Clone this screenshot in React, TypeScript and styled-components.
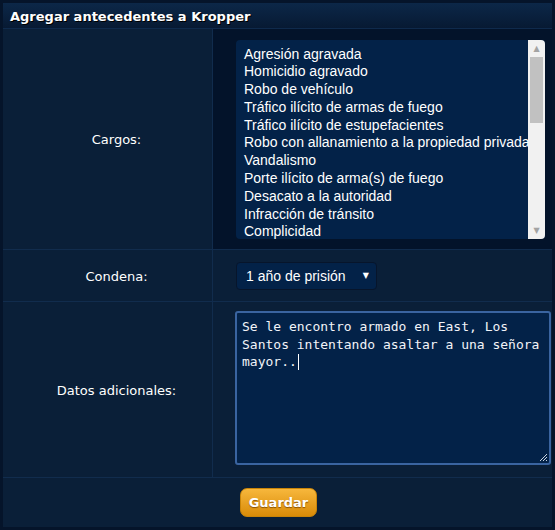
import React from 'react';
import styled, { createGlobalStyle } from 'styled-components';

const cargos = [
  'Agresión agravada',
  'Homicidio agravado',
  'Robo de vehículo',
  'Tráfico ilícito de armas de fuego',
  'Tráfico ilícito de estupefacientes',
  'Robo con allanamiento a la propiedad privada',
  'Vandalismo',
  'Porte ilícito de arma(s) de fuego',
  'Desacato a la autoridad',
  'Infracción de tránsito',
  'Complicidad',
  'Evasión de arresto',
  'Conducción temeraria',
];

export default function App() {
  return (
    <>
      <GlobalStyle />
      <Panel>
        <Header children="Agregar antecedentes a Kropper" />

        <Form>
          <Row height={220}>
            <Label children="Cargos:" />
            <Field dark>
              <ListBox>
                <Options>
                  {cargos.map((cargo) => (
                    <Option key={cargo} children={cargo} />
                  ))}
                </Options>
                <ScrollTrack>
                  <Arrow children="▲" />
                  <ThumbArea>
                    <Thumb />
                  </ThumbArea>
                  <Arrow children="▼" />
                </ScrollTrack>
              </ListBox>
            </Field>
          </Row>

          <Row height={51}>
            <Label children="Condena:" />
            <Field>
              <Select>
                <SelectValue children="1 año de prisión" />
                <SelectArrow children="▼" />
              </Select>
            </Field>
          </Row>

          <Row height={175}>
            <Label children="Datos adicionales:" />
            <Field top>
              <TextArea>
                Se le encontro armado en East, Los Santos intentando asaltar a una señora mayor..
                <Caret />
                <Grip width="10" height="10" viewBox="0 0 10 10">
                  <path d="M9 2 L2 9 M9 5 L5 9 M9 8 L8 9" stroke="#c9d3e0" strokeWidth="1" />
                </Grip>
              </TextArea>
            </Field>
          </Row>

          <Footer>
            <Button children="Guardar" />
          </Footer>
        </Form>
      </Panel>
    </>
  );
}

const GlobalStyle = createGlobalStyle`
  body {
    margin: 0;
    background: #041326;
  }
`;

const Panel = styled.div`
  width: 555px;
  height: 530px;
  box-sizing: border-box;
  border: 3px solid #05142a;
  background: #0a1f38;
  display: flex;
  flex-direction: column;
  font-family: 'DejaVu Sans', Verdana, sans-serif;
  color: #ffffff;
`;

const Header = styled.div`
  height: 26px;
  box-sizing: border-box;
  padding: 1px 0 0 7px;
  display: flex;
  align-items: center;
  background: linear-gradient(#0c2748, #071a33);
  border-bottom: 1px solid #0f2a4c;
  font-weight: 700;
  font-size: 13px;
  text-shadow: 1px 1px 0 #000;
`;

const Form = styled.div`
  display: flex;
  flex-direction: column;
  flex: 1;
`;

const Row = styled.div<{ height: number }>`
  display: grid;
  grid-template-columns: 210px 1fr;
  height: ${(props) => props.height}px;
  border-bottom: 1px solid #112c4d;
`;

const Label = styled.div`
  display: flex;
  align-items: center;
  justify-content: center;
  border-right: 1px solid #112c4d;
  font-size: 13px;
  padding: 1px 0 0 18px;
`;

const Field = styled.div<{ dark?: boolean; top?: boolean }>`
  display: flex;
  align-items: ${(props) => (props.top ? 'flex-start' : 'center')};
  padding: ${(props) => (props.top ? '9px 0 0 23px' : '0 0 0 23px')};
  background: ${(props) => (props.dark ? '#03132a' : 'transparent')};
`;

const ListBox = styled.div`
  width: 309px;
  height: 199px;
  display: flex;
  border-radius: 4px;
  overflow: hidden;
  background: #032248;
`;

const Options = styled.div`
  flex: 1;
  overflow: hidden;
  padding: 6px 0 0 8px;
  font-family: 'Liberation Sans', Arial, sans-serif;
  font-size: 14px;
  line-height: 17.8px;
  white-space: nowrap;
`;

const Option = styled.div``;

const ScrollTrack = styled.div`
  width: 17px;
  background: #f1f1f1;
  display: flex;
  flex-direction: column;
`;

const Arrow = styled.div`
  height: 17px;
  font-size: 8px;
  color: #a3a3a3;
  display: flex;
  align-items: center;
  justify-content: center;
  font-family: 'DejaVu Sans', sans-serif;
`;

const ThumbArea = styled.div`
  flex: 1;
  padding: 0 2px;
`;

const Thumb = styled.div`
  height: 66px;
  background: #c1c1c1;
`;

const Select = styled.div`
  width: 141px;
  height: 28px;
  box-sizing: border-box;
  display: flex;
  align-items: center;
  justify-content: space-between;
  padding: 0 7px 0 9px;
  border: 1px solid #07152b;
  border-radius: 4px;
  background: #032248;
  font-family: 'Liberation Sans', Arial, sans-serif;
  font-size: 14px;
`;

const SelectValue = styled.span`
  white-space: nowrap;
`;

const SelectArrow = styled.span`
  font-family: 'DejaVu Sans', sans-serif;
  font-size: 8px;
`;

const TextArea = styled.div`
  position: relative;
  width: 316px;
  height: 154px;
  box-sizing: border-box;
  margin-left: -1px;
  padding: 5px 5px;
  border: 2px solid #3a64a0;
  border-radius: 3px;
  background: #032248;
  font-family: 'DejaVu Sans Mono', 'Liberation Mono', monospace;
  font-size: 13px;
  line-height: 17.5px;
  color: #f2f4f8;
`;

const Caret = styled.span`
  display: inline-block;
  width: 1px;
  height: 16px;
  margin-left: 1px;
  vertical-align: -4px;
  background: #ffffff;
`;

const Grip = styled.svg`
  position: absolute;
  right: 1px;
  bottom: 1px;
`;

const Footer = styled.div`
  flex: 1;
  display: flex;
  align-items: center;
  padding-left: 237px;
`;

const Button = styled.button`
  width: 77px;
  height: 29px;
  border: 1px solid #c98408;
  border-radius: 7px;
  background: linear-gradient(#f7b73c, #d98b08);
  color: #ffffff;
  font-family: 'DejaVu Sans', Verdana, sans-serif;
  font-weight: 700;
  font-size: 13px;
  text-shadow: 0 1px 1px #8a5200;
  cursor: pointer;
`;
